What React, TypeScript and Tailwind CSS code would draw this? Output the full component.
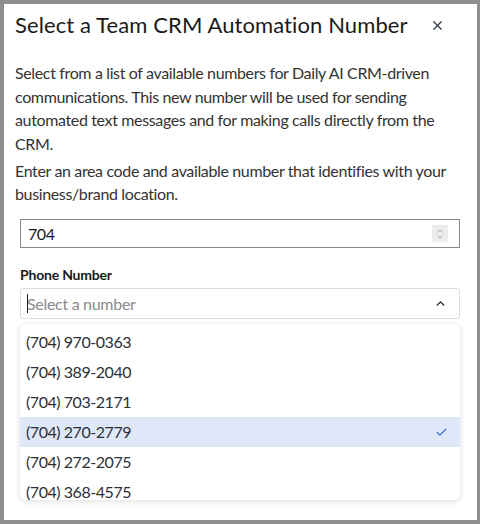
import { X, ChevronUp, ChevronDown, Check } from "lucide-react";

const numbers = [
  "(704) 970-0363",
  "(704) 389-2040",
  "(704) 703-2171",
  "(704) 270-2779",
  "(704) 272-2075",
  "(704) 368-4575",
];

export default function App() {
  const selected = "(704) 270-2779";

  return (
    <div className="h-[524px] w-[480px] bg-[#8f8f8f] pb-[4px] pl-[4px] pr-[3px] pt-[4px] font-['Lato','Noto_Sans',sans-serif]">
      <div className="h-full bg-white pl-[11px] pr-[17px] pt-[6px]">
        <div className="flex items-center justify-between">
          <h2 className="text-[22px] leading-[30px] tracking-[0.1px] text-[#1a1a1a]">
            Select a Team CRM Automation Number
          </h2>
          <button className="mr-[15px] text-[#2d3748]">
            <X className="h-[15px] w-[15px]" strokeWidth={2} />
          </button>
        </div>

        <div className="mt-[21px] text-[16px] tracking-[-0.36px] text-[#333]">
          <p className="leading-[23.5px]">
            Select from a list of available numbers for Daily AI CRM-driven
            communications. This new number will be used for sending automated
            text messages and for making calls directly from the CRM.
          </p>
          <p className="mt-[4px] leading-[23px]">
            Enter an area code and available number that identifies with your
            business/brand location.
          </p>
        </div>

        <div className="ml-[5px] mt-[14px] flex h-[29px] items-center justify-between border border-[#8a8a8a] pl-[7px] pr-[11px]">
          <span className="text-[16px] tracking-[-0.45px] text-[#1a1a1a]">704</span>
          <span className="flex h-[17px] w-[16px] flex-col items-center justify-center bg-[#ececec] text-[#7a7a7a]">
            <ChevronUp className="-mb-[2px] h-[8px] w-[8px]" strokeWidth={2} />
            <ChevronDown className="h-[8px] w-[8px]" strokeWidth={2} />
          </span>
        </div>

        <div className="ml-[5px] mt-[18px] text-[14px] font-bold leading-[18px] tracking-[-0.2px] text-[#1a1a1a]">
          Phone Number
        </div>
        <div className="ml-[5px] mt-[4px] flex h-[31px] items-center justify-between rounded-[3px] border border-[#dcdcdc] pl-[6px] pr-[12px]">
          <span className="flex items-center text-[16px] tracking-[-0.3px] text-[#8a8a8a]">
            <span className="mr-[-1px] h-[19px] w-px bg-[#1a1a1a]" />
            Select a number
          </span>
          <ChevronUp className="h-[13px] w-[13px] text-[#1a1a1a]" strokeWidth={2.5} />
        </div>

        <div className="ml-[5px] mt-[5px] h-[176px] overflow-hidden rounded-[6px] bg-white pt-[3px] shadow-[0_1px_6px_rgba(0,0,0,0.14)]">
          {numbers.map((n) => (
            <div
              key={n}
              className={
                n === selected
                  ? "flex h-[30px] items-center justify-between bg-[#dfe8f9] pl-[6px] pr-[12px]"
                  : "flex h-[30px] items-center justify-between pl-[6px] pr-[12px]"
              }
            >
              <span className="text-[16px] tracking-[-0.45px] text-[#2d2f36]">{n}</span>
              {n === selected && (
                <Check className="h-[13px] w-[13px] text-[#3b63d6]" strokeWidth={2} />
              )}
            </div>
          ))}
        </div>
      </div>
    </div>
  );
}
